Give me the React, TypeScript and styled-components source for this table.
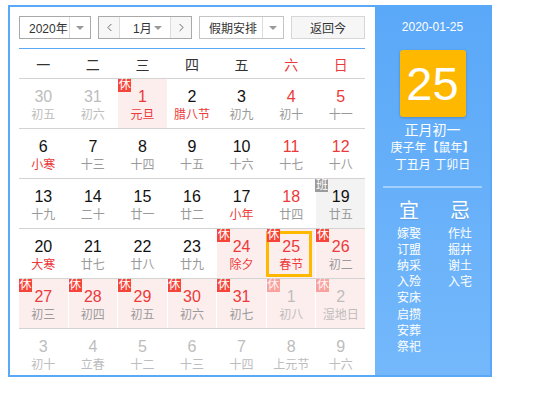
import React from "react";
import styled, { createGlobalStyle } from "styled-components";
import { ChevronLeft, ChevronRight } from "lucide-react";

const GlobalStyle = createGlobalStyle`
  body {
    margin: 0;
    background: #fff;
    font-family: "Liberation Sans", "Noto Sans CJK SC", sans-serif;
  }
`;

type Tone = "normal" | "red" | "muted";
type Bg = "none" | "rest" | "work";

interface IDay {
  num: number;
  lunar: string;
  numTone: Tone;
  lunarTone: Tone | "gray";
  bg?: Bg;
  badge?: "休" | "班";
  faded?: boolean;
  selected?: boolean;
}

const d = (
  num: number,
  lunar: string,
  numTone: Tone,
  lunarTone: Tone | "gray",
  extra: Partial<IDay> = {}
): IDay => ({ num, lunar, numTone, lunarTone, ...extra });

const rest = { bg: "rest" as Bg, badge: "休" as const };

const weeks: IDay[][] = [
  [
    d(30, "初五", "muted", "muted"),
    d(31, "初六", "muted", "muted"),
    d(1, "元旦", "red", "red", rest),
    d(2, "腊八节", "normal", "red"),
    d(3, "初九", "normal", "gray"),
    d(4, "初十", "red", "gray"),
    d(5, "十一", "red", "gray"),
  ],
  [
    d(6, "小寒", "normal", "red"),
    d(7, "十三", "normal", "gray"),
    d(8, "十四", "normal", "gray"),
    d(9, "十五", "normal", "gray"),
    d(10, "十六", "normal", "gray"),
    d(11, "十七", "red", "gray"),
    d(12, "十八", "red", "gray"),
  ],
  [
    d(13, "十九", "normal", "gray"),
    d(14, "二十", "normal", "gray"),
    d(15, "廿一", "normal", "gray"),
    d(16, "廿二", "normal", "gray"),
    d(17, "小年", "normal", "red"),
    d(18, "廿四", "red", "gray"),
    d(19, "廿五", "normal", "gray", { bg: "work", badge: "班" }),
  ],
  [
    d(20, "大寒", "normal", "red"),
    d(21, "廿七", "normal", "gray"),
    d(22, "廿八", "normal", "gray"),
    d(23, "廿九", "normal", "gray"),
    d(24, "除夕", "red", "red", rest),
    d(25, "春节", "red", "red", { ...rest, selected: true }),
    d(26, "初二", "red", "gray", rest),
  ],
  [
    d(27, "初三", "red", "gray", rest),
    d(28, "初四", "red", "gray", rest),
    d(29, "初五", "red", "gray", rest),
    d(30, "初六", "red", "gray", rest),
    d(31, "初七", "red", "gray", rest),
    d(1, "初八", "muted", "muted", { ...rest, faded: true }),
    d(2, "湿地日", "muted", "muted", { ...rest, faded: true }),
  ],
  [
    d(3, "初十", "muted", "muted"),
    d(4, "立春", "muted", "muted"),
    d(5, "十二", "muted", "muted"),
    d(6, "十三", "muted", "muted"),
    d(7, "十四", "muted", "muted"),
    d(8, "上元节", "muted", "muted"),
    d(9, "十六", "muted", "muted"),
  ],
];

const weekdays = ["一", "二", "三", "四", "五", "六", "日"];
const yi = ["嫁娶", "订盟", "纳采", "入殓", "安床", "启攒", "安葬", "祭祀"];
const ji = ["作灶", "掘井", "谢土", "入宅"];

const toneColor = {
  normal: "#111",
  red: "#ec3a3a",
  muted: "#bdbdbd",
  gray: "#9a9a9a",
};

const App = () => {
  return (
    <>
      <GlobalStyle />
      <Frame>
        <Main>
          <Toolbar>
            <Select $w={72}>
              <SelectText>2020年</SelectText>
              <Caret />
            </Select>
            <MonthGroup>
              <NavButton>
                <ChevronLeft size={13} strokeWidth={1.6} />
              </NavButton>
              <MonthSelect>
                <span>1月</span>
                <Triangle />
              </MonthSelect>
              <NavButton>
                <ChevronRight size={13} strokeWidth={1.6} />
              </NavButton>
            </MonthGroup>
            <Select $w={85} $light>
              <SelectText>假期安排</SelectText>
              <Caret />
            </Select>
            <TodayButton>返回今</TodayButton>
          </Toolbar>

          <WeekHeader>
            {weekdays.map((w, i) => (
              <WeekDay key={w} $red={i >= 5}>
                {w}
              </WeekDay>
            ))}
          </WeekHeader>

          {weeks.map((week, wi) => (
            <WeekRow key={wi}>
              {week.map((day, di) => (
                <Cell key={di} $bg={day.bg ?? "none"} $selected={!!day.selected}>
                  {day.badge && (
                    <Badge $kind={day.badge} $faded={!!day.faded}>
                      {day.badge}
                    </Badge>
                  )}
                  <DayNum $tone={day.numTone}>{day.num}</DayNum>
                  <Lunar $tone={day.lunarTone}>{day.lunar}</Lunar>
                </Cell>
              ))}
            </WeekRow>
          ))}
        </Main>

        <Side>
          <SideDate>2020-01-25</SideDate>
          <BigDay>25</BigDay>
          <LunarInfo>
            <LunarMain>正月初一</LunarMain>
            <div>庚子年【鼠年】</div>
            <div>丁丑月 丁卯日</div>
          </LunarInfo>
          <Divider />
          <Advice>
            <AdviceCol>
              <AdviceTitle>宜</AdviceTitle>
              {yi.map((t) => (
                <AdviceItem key={t}>{t}</AdviceItem>
              ))}
            </AdviceCol>
            <AdviceCol>
              <AdviceTitle>忌</AdviceTitle>
              {ji.map((t) => (
                <AdviceItem key={t}>{t}</AdviceItem>
              ))}
            </AdviceCol>
          </Advice>
        </Side>
      </Frame>
    </>
  );
};
export default App;

const Frame = styled.div`
  display: flex;
  width: 484px;
  height: 372px;
  box-sizing: border-box;
  margin: 5px 0 0 8px;
  border: 2px solid #5aa8f8;
  background: #fff;
`;

const Main = styled.div`
  width: 365px;
  box-sizing: border-box;
  padding: 9px 10px 0 9px;
  overflow: hidden;
`;

const Toolbar = styled.div`
  display: flex;
  justify-content: space-between;
  height: 23px;
  font-size: 12px;
  color: #333;
`;

const Select = styled.div<{ $w: number; $light?: boolean }>`
  display: flex;
  width: ${(p) => p.$w}px;
  box-sizing: border-box;
  border: 1px solid ${(p) => (p.$light ? "#c4c4c4" : "#a9a9a9")};
  background: #fff;
`;

const SelectText = styled.span`
  flex: 1;
  display: flex;
  align-items: center;
  padding-left: 9px;
`;

const Caret = styled.span`
  width: 20px;
  border-left: 1px solid #dcdcdc;
  display: flex;
  align-items: center;
  justify-content: center;
  &::after {
    content: "";
    border-left: 4px solid transparent;
    border-right: 4px solid transparent;
    border-top: 4px solid #999;
  }
`;

const Triangle = styled.span`
  border-left: 4px solid transparent;
  border-right: 4px solid transparent;
  border-top: 4px solid #999;
`;

const MonthGroup = styled.div`
  display: flex;
  width: 94px;
  box-sizing: border-box;
  border: 1px solid #a9a9a9;
`;

const NavButton = styled.span`
  width: 20px;
  display: flex;
  align-items: center;
  justify-content: center;
  background: #f7f7f7;
  color: #555;
`;

const MonthSelect = styled.span`
  flex: 1;
  display: flex;
  align-items: center;
  justify-content: space-between;
  padding: 0 8px 0 13px;
  border-left: 1px solid #dcdcdc;
  border-right: 1px solid #dcdcdc;
  background: #fff;
`;

const TodayButton = styled.span`
  width: 74px;
  box-sizing: border-box;
  display: flex;
  align-items: center;
  justify-content: center;
  border: 1px solid #d6d6d6;
  background: #f6f6f6;
`;

const WeekHeader = styled.div`
  display: grid;
  grid-template-columns: repeat(7, 1fr);
  column-gap: 1px;
  height: 31px;
  box-sizing: border-box;
  margin-top: 9px;
  border-top: 1px solid #5aa8f8;
  border-bottom: 1px solid #d3d3d3;
`;

const WeekDay = styled.span<{ $red: boolean }>`
  display: flex;
  align-items: center;
  justify-content: center;
  font-size: 14px;
  color: ${(p) => (p.$red ? "#ec3a3a" : "#333")};
`;

const WeekRow = styled.div`
  display: grid;
  grid-template-columns: repeat(7, 1fr);
  column-gap: 1px;
  height: 50px;
  box-sizing: border-box;
  border-bottom: 1px solid #d3d3d3;
`;

const Cell = styled.div<{ $bg: Bg; $selected: boolean }>`
  position: relative;
  display: flex;
  flex-direction: column;
  align-items: center;
  padding-top: 8px;
  background: ${(p) =>
    p.$bg === "rest" ? "#fdeeee" : p.$bg === "work" ? "#f3f3f3" : "transparent"};
  ${(p) =>
    p.$selected &&
    `&::after {
      content: "";
      position: absolute;
      top: 2px;
      left: -1px;
      right: 3px;
      bottom: 1px;
      border: 3px solid #ffb800;
      box-sizing: border-box;
    }`}
`;

const Badge = styled.span<{ $kind: "休" | "班"; $faded: boolean }>`
  position: absolute;
  top: 0;
  left: ${(p) => (p.$kind === "班" ? "-1px" : "0")};
  width: 13px;
  height: 13px;
  font-size: 12px;
  line-height: 13px;
  text-align: center;
  color: #fff;
  background: ${(p) => (p.$kind === "班" ? "#9b9b9b" : "#f5453a")};
  opacity: ${(p) => (p.$faded ? 0.45 : 1)};
  z-index: 1;
`;

const DayNum = styled.span<{ $tone: Tone }>`
  font-size: 16px;
  line-height: 20px;
  color: ${(p) => toneColor[p.$tone]};
`;

const Lunar = styled.span<{ $tone: Tone | "gray" }>`
  font-size: 12px;
  line-height: 16px;
  color: ${(p) => toneColor[p.$tone]};
`;

const Side = styled.div`
  flex: 1;
  display: flex;
  flex-direction: column;
  align-items: center;
  padding-top: 12px;
  background: linear-gradient(#5aa8f8, #74b8fb);
  color: #fff;
  font-size: 12px;
`;

const SideDate = styled.div`
  line-height: 16px;
`;

const BigDay = styled.div`
  width: 66px;
  height: 67px;
  margin-top: 15px;
  display: flex;
  align-items: center;
  justify-content: center;
  background: #ffb800;
  border-radius: 3px;
  box-shadow: 0 1px 3px rgba(0, 0, 0, 0.2);
  font-size: 47px;
`;

const LunarInfo = styled.div`
  margin-top: 5px;
  line-height: 17.5px;
  text-align: center;
`;

const LunarMain = styled.div`
  font-size: 14px;
`;

const Divider = styled.div`
  width: 99px;
  height: 2px;
  margin-top: 11px;
  background: rgba(255, 255, 255, 0.4);
`;

const Advice = styled.div`
  align-self: stretch;
  display: grid;
  grid-template-columns: 50px 50px;
  column-gap: 1px;
  padding-left: 9px;
  margin-top: 11px;
`;

const AdviceCol = styled.div`
  display: flex;
  flex-direction: column;
  align-items: center;
`;

const AdviceTitle = styled.div`
  font-size: 20px;
  line-height: 24px;
  margin-bottom: 3px;
  text-shadow: 0 1px 1px rgba(0, 0, 0, 0.1);
`;

const AdviceItem = styled.div`
  line-height: 16.2px;
`;
